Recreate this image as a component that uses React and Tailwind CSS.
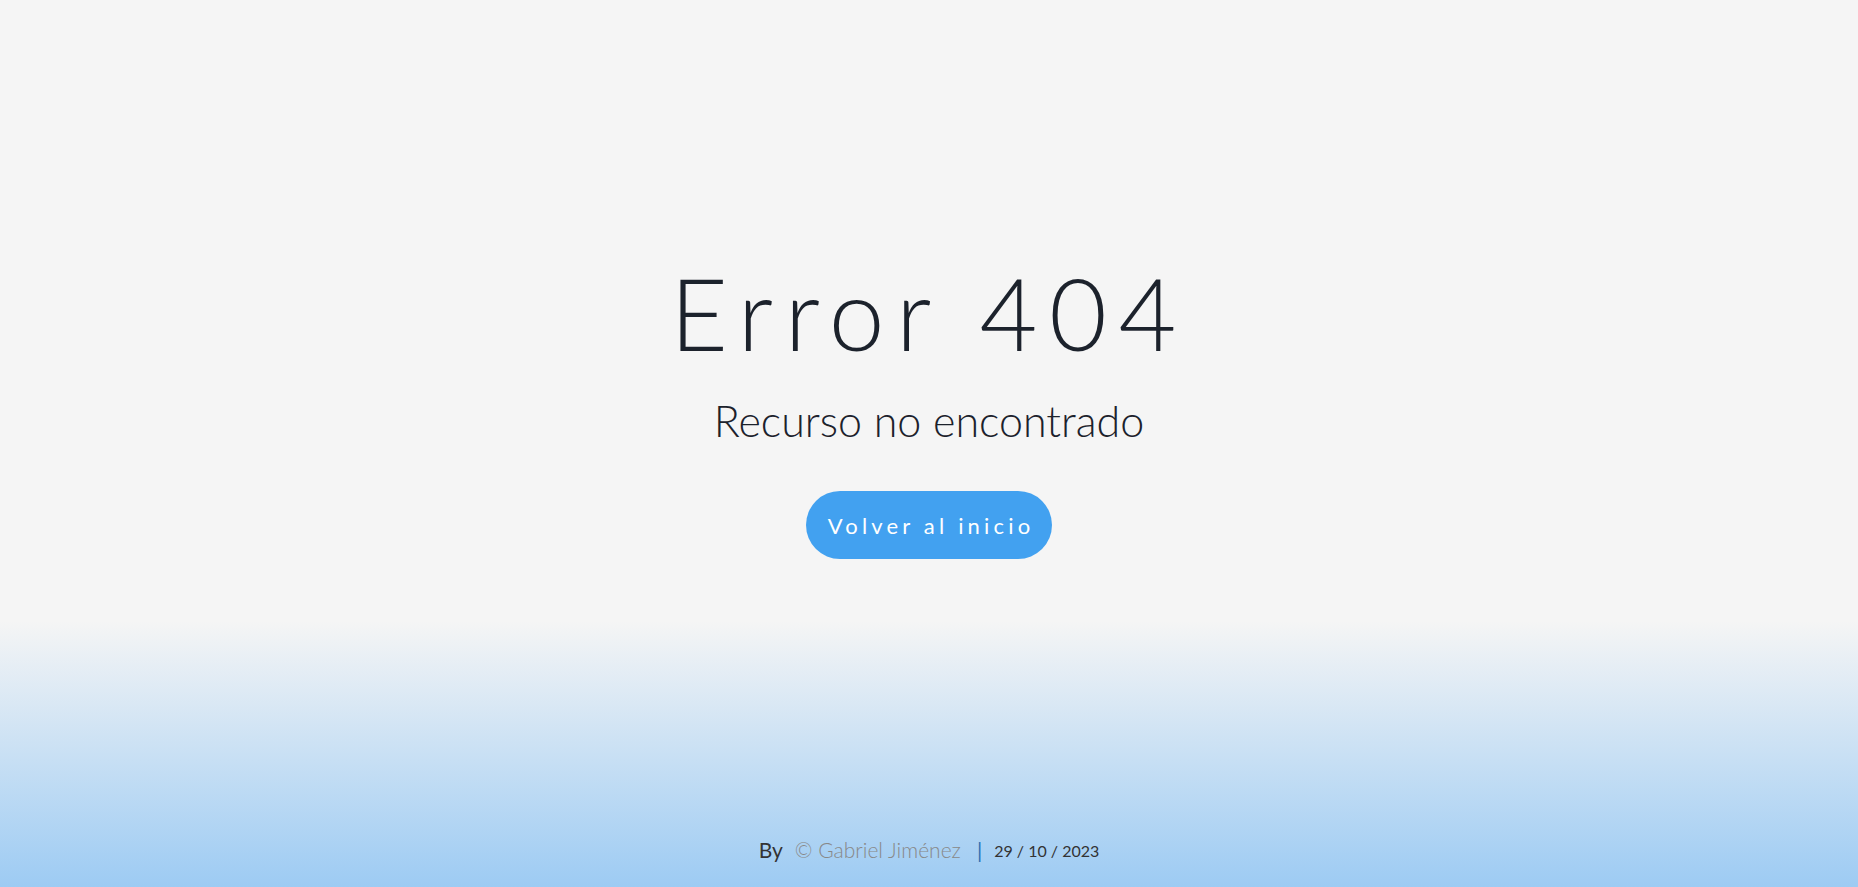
import React from 'react';

const App = () => {
  return (
    <div className="h-screen w-full flex flex-col bg-[linear-gradient(to_bottom,#f5f5f5_70%,#9dcbf3_100%)] font-['Lato','Open_Sans',sans-serif] text-[#1c222c]">
      {/* Main message */}
      <main className="flex-1 flex flex-col items-center justify-center pb-[16px]">
        <h1 className="text-[100px] leading-none font-light tracking-[0.115em]">Error 404</h1>
        <p className="mt-[37px] text-[43px] leading-none font-light">Recurso no encontrado</p>
        <a
          href="#"
          className="mt-[49px] w-[246px] h-[68px] rounded-full bg-[#42a1f0] text-white text-[22px] tracking-[0.19em] pl-[0.19em] flex items-center justify-center"
        >
          Volver al inicio
        </a>
      </main>

      {/* Footer */}
      <footer className="h-[50px] flex items-start justify-center text-[21px] leading-none pt-[2px]">
        <span className="text-[#333]">By</span>
        <span className="ml-[12px] text-[#888] font-light">© Gabriel Jiménez</span>
        <span className="ml-[16px] text-[#2c6fb0]">|</span>
        <span className="ml-[12px] mt-[4px] text-[16px] text-[#333]">29 / 10 / 2023</span>
      </footer>
    </div>
  );
};

export default App;
